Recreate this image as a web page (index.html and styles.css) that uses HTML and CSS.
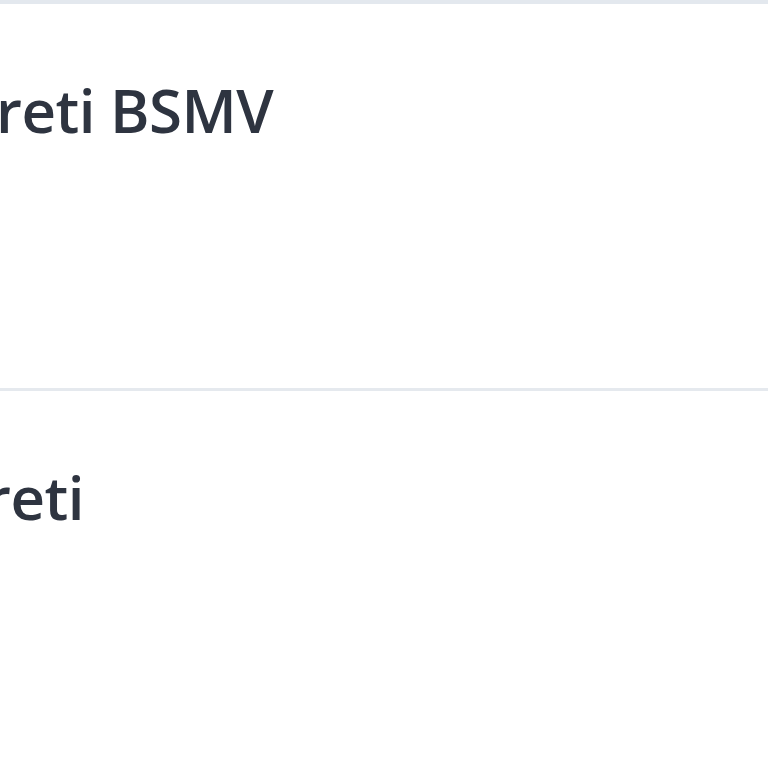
FILE: index.html
```html
<!DOCTYPE html>
<html>
<head>
<meta charset="utf-8">
<link rel="stylesheet" href="styles.css">
</head>
<body>
<div class="list">
  <div class="row"><span class="title">reti BSMV</span></div>
  <div class="row"><span class="title title-short">reti</span></div>
</div>
</body>
</html>
```
FILE: styles.css
```css
html, body {
  margin: 0;
  padding: 0;
  background: #ffffff;
  overflow: hidden;
}
.list {
  width: 768px;
  height: 768px;
  border-top: 4px solid #e3e8ee;
  box-sizing: border-box;
}
.row {
  height: 384px;
  box-sizing: border-box;
  padding-top: 66px;
  padding-left: 0;
}
.row + .row {
  border-top: 3px solid #e5e9ee;
}
.title {
  display: block;
  font-family: "Open Sans", "Noto Sans", sans-serif;
  font-weight: 600;
  font-size: 60px;
  line-height: 80px;
  color: #2e3440;
  margin-left: -4px;
  letter-spacing: -0.5px;
}
.title-short {
  margin-left: -15px;
}
```
